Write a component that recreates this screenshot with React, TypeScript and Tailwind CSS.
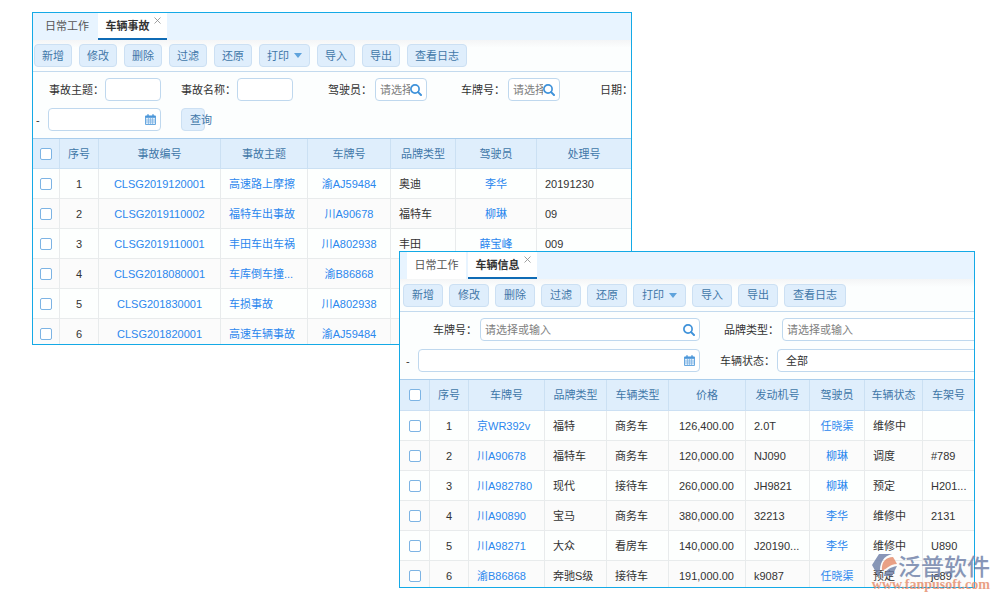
import type { ReactNode } from 'react';
import { clsx } from 'clsx';

interface Column {
  title: string;
  width?: string;
  align?: 'left' | 'center' | 'right';
  link?: boolean;
}

const ACCIDENT_COLUMNS: Column[] = [
  { title: '序号', width: 'w-[39px]', align: 'center' },
  { title: '事故编号', width: 'w-[122px]', align: 'center', link: true },
  { title: '事故主题', width: 'w-[87px]', link: true },
  { title: '车牌号', width: 'w-[83px]', align: 'center', link: true },
  { title: '品牌类型', width: 'w-[65px]' },
  { title: '驾驶员', width: 'w-[81px]', align: 'center', link: true },
  { title: '处理号' },
];

const ACCIDENTS = [
  ['1', 'CLSG2019120001', '高速路上摩擦', '渝AJ59484', '奥迪', '李华', '20191230'],
  ['2', 'CLSG2019110002', '福特车出事故', '川A90678', '福特车', '柳琳', '09'],
  ['3', 'CLSG2019110001', '丰田车出车祸', '川A802938', '丰田', '薛宝峰', '009'],
  ['4', 'CLSG2018080001', '车库倒车撞...', '渝B86868', '', '', ''],
  ['5', 'CLSG201830001', '车损事故', '川A802938', '', '', ''],
  ['6', 'CLSG201820001', '高速车辆事故', '渝AJ59484', '', '', ''],
];

const VEHICLE_COLUMNS: Column[] = [
  { title: '序号', width: 'w-[39px]', align: 'center' },
  { title: '车牌号', width: 'w-[76px]', link: true },
  { title: '品牌类型', width: 'w-[62px]' },
  { title: '车辆类型', width: 'w-[62px]' },
  { title: '价格', width: 'w-[77px]', align: 'right' },
  { title: '发动机号', width: 'w-16' },
  { title: '驾驶员', width: 'w-[55px]', align: 'center', link: true },
  { title: '车辆状态', width: 'w-[58px]' },
  { title: '车架号' },
];

const VEHICLES = [
  ['1', '京WR392v', '福特', '商务车', '126,400.00', '2.0T', '任晓渠', '维修中', ''],
  ['2', '川A90678', '福特车', '商务车', '120,000.00', 'NJ090', '柳琳', '调度', '#789'],
  ['3', '川A982780', '现代', '接待车', '260,000.00', 'JH9821', '柳琳', '预定', 'H201...'],
  ['4', '川A90890', '宝马', '商务车', '380,000.00', '32213', '李华', '维修中', '2131'],
  ['5', '川A98271', '大众', '看房车', '140,000.00', 'J20190...', '李华', '维修中', 'U890'],
  ['6', '渝B86868', '奔驰S级', '接待车', '191,000.00', 'k9087', '任晓渠', '预定', 'je89'],
];

const ACTIONS = ['新增', '修改', '删除', '过滤', '还原', '打印', '导入', '导出', '查看日志'];

const BOX = 'flex h-[23px] items-center rounded border border-[#bfd8ee] bg-white';

function SearchIcon() {
  return (
    <svg viewBox="0 0 12 12" className="size-3 shrink-0" fill="none" stroke="#3f92da">
      <circle cx="5" cy="5" r="4.1" strokeWidth="1.7" />
      <path d="M8.1 8.1 11 11" strokeWidth="2" strokeLinecap="round" />
    </svg>
  );
}

function CalendarIcon() {
  return (
    <svg viewBox="0 0 11 11" className="size-[11px] shrink-0">
      <path d="M.5 2h10v8.5H.5z" fill="#dcecfa" stroke="#69a8df" />
      <path d="M.5 1.8h10v2H.5z" fill="#4b96d9" />
      <path d="M3 .3v2M8 .3v2" stroke="#4b96d9" strokeWidth="1.4" />
      <path d="M3.5 4v6M5.5 4v6M7.5 4v6M1 6h9M1 8h9" stroke="#7db3e3" strokeWidth=".7" />
    </svg>
  );
}

function Tabs({ current, raised }: { current: string; raised?: boolean }) {
  return (
    <div className={clsx('flex h-[27px] bg-[#e8f4ff]', raised ? 'pl-[7px]' : 'pl-[3px]')}>
      <button
        className={clsx('pb-0.5 text-center text-[#555]', raised ? 'w-[59px] bg-white' : 'w-[62px]')}
      >
        日常工作
      </button>
      <div className={clsx('relative flex border-b-2 border-[#0f6bb5] bg-white', raised && 'ml-0.5')}>
        <button className="w-[69px] pr-2.5 text-center font-bold text-[#333]">{current}</button>
        <button aria-label="关闭" className="absolute top-1 right-1.5">
          <svg viewBox="0 0 7 7" className="size-[7px]" stroke="#888" strokeWidth=".8">
            <path d="M.5.5l6 6M6.5.5l-6 6" />
          </svg>
        </button>
      </div>
    </div>
  );
}

function Toolbar({ className, buttonClass }: { className: string; buttonClass: string }) {
  return (
    <div
      className={clsx(
        'flex items-center overflow-hidden border-b border-[#c3daee] bg-linear-to-b from-[#f4f5f6] to-[#fcfefe] to-25%',
        className,
      )}
    >
      {ACTIONS.map((action) => (
        <button
          key={action}
          className={clsx(
            'flex h-[23px] shrink-0 items-center gap-[5px] rounded border border-[#cce0f3] bg-[#dfeefc] text-[#3f77a8]',
            buttonClass,
          )}
        >
          {action}
          {action === '打印' && (
            <svg viewBox="0 0 8 5" className="h-[5px] w-2" fill="#5fa3dc">
              <path d="M0 0h8L4 5z" />
            </svg>
          )}
        </button>
      ))}
    </div>
  );
}

interface SearchFieldProps {
  id: string;
  label: string;
  labelWidth: string;
  boxWidth: string;
  icon?: boolean;
  placeholder?: string;
}

function SearchField({ id, label, labelWidth, boxWidth, icon, placeholder }: SearchFieldProps) {
  return (
    <div className="flex shrink-0 items-center">
      <label htmlFor={id} className={clsx('whitespace-nowrap', labelWidth)}>
        {label}
      </label>
      <div className={clsx(BOX, boxWidth, 'px-1')}>
        <input
          id={id}
          placeholder={placeholder}
          className="min-w-0 flex-1 outline-none placeholder:text-[#808080]"
        />
        {icon && <SearchIcon />}
      </div>
    </div>
  );
}

function DateBox({ id, label, width }: { id: string; label: string; width: string }) {
  return (
    <div className={clsx(BOX, width, 'shrink-0 px-1')}>
      <input id={id} aria-label={label} className="min-w-0 flex-1 outline-none" />
      <CalendarIcon />
    </div>
  );
}

function CheckBox({ label }: { label: string }) {
  return (
    <input
      type="checkbox"
      aria-label={label}
      className="mx-auto block size-3 appearance-none rounded-xs border border-[#7db4e4] bg-white"
    />
  );
}

interface DataTableProps {
  columns: Column[];
  rows: string[][];
  checkWidth: string;
  headHeight: string;
}

function DataTable({ columns, rows, checkWidth, headHeight }: DataTableProps) {
  return (
    <table className="w-full table-fixed border-separate border-spacing-0 border-t border-[#a9cdec]">
      <thead>
        <tr className={clsx('bg-[#dfeefc] text-[#3f77a8]', headHeight)}>
          <th className={clsx('border-r border-b border-[#cbe0f3]', checkWidth)}>
            <CheckBox label="全选" />
          </th>
          {columns.map((col) => (
            <th
              key={col.title}
              className={clsx(
                'border-r border-b border-[#cbe0f3] text-center font-normal whitespace-nowrap last:border-r-0',
                col.width,
              )}
            >
              {col.title}
            </th>
          ))}
        </tr>
      </thead>
      <tbody>
        {rows.map((row) => (
          <tr key={row[0]} className="h-[30px] bg-[#fdfffe] even:bg-[#fbfbfb]">
            <td className="border-r border-b border-[#e8ebec]">
              <CheckBox label={`选择第${row[0]}行`} />
            </td>
            {columns.map((col, i) => (
              <td
                key={col.title}
                className={clsx(
                  'border-r border-b border-[#e8ebec] whitespace-nowrap last:border-r-0',
                  col.align === 'center' && 'text-center',
                  col.align === 'right' && 'pr-[11px] text-right',
                  !col.align && 'pl-2',
                )}
              >
                {col.link && row[i] ? (
                  <a href="#" className="text-[#2b87ee]">
                    {row[i]}
                  </a>
                ) : (
                  row[i]
                )}
              </td>
            ))}
          </tr>
        ))}
      </tbody>
    </table>
  );
}

function Window({ className, children }: { className: string; children: ReactNode }) {
  return (
    <section className={clsx('absolute overflow-hidden border border-[#14a9e6] bg-[#fcfefe]', className)}>
      {children}
    </section>
  );
}

function AccidentWindow() {
  return (
    <Window className="top-3 right-[368px] left-8 max-h-[333px]">
      <Tabs current="车辆事故" />
      <Toolbar className="h-8 gap-[7px] pl-px" buttonClass="px-[7px]" />
      <form className="pt-1.5 pb-[7px]">
        <div className="flex pl-4">
          <SearchField id="topic" label="事故主题：" labelWidth="w-14" boxWidth="mr-5 w-14" />
          <SearchField id="name" label="事故名称：" labelWidth="w-14" boxWidth="mr-[35px] w-14" />
          <SearchField
            id="driver"
            label="驾驶员："
            labelWidth="w-[47px]"
            boxWidth="mr-[34px] w-[52px]"
            placeholder="请选择或输入"
            icon
          />
          <SearchField
            id="plate"
            label="车牌号："
            labelWidth="w-[47px]"
            boxWidth="mr-10 w-[52px]"
            placeholder="请选择或输入"
            icon
          />
          <label htmlFor="accident-date" className="flex shrink-0 items-center whitespace-nowrap">
            日期：
          </label>
        </div>
        <div className="mt-[7px] flex items-center pl-[3px]">
          <span className="w-3 shrink-0">-</span>
          <DateBox id="accident-date" label="结束日期" width="mr-5 w-[113px]" />
          <button
            type="button"
            className="h-[23px] w-6 rounded border border-[#cce0f3] bg-[#dfeefc] pl-2 whitespace-nowrap text-[#3f77a8]"
          >
            查询
          </button>
        </div>
      </form>
      <DataTable columns={ACCIDENT_COLUMNS} rows={ACCIDENTS} checkWidth="w-[27px]" headHeight="h-[30px]" />
    </Window>
  );
}

function VehicleWindow() {
  return (
    <Window className="top-[251px] right-[25px] left-[399px] max-h-[337px]">
      <Tabs current="车辆信息" raised />
      <Toolbar className="h-[33px] gap-1.5 pl-[3px]" buttonClass="px-2" />
      <form className="pt-1.5 pb-[7px]">
        <div className="flex pl-[33px]">
          <SearchField
            id="vehicle-plate"
            label="车牌号："
            labelWidth="w-[47px]"
            boxWidth="mr-6 w-[220px]"
            placeholder="请选择或输入"
            icon
          />
          <SearchField
            id="brand"
            label="品牌类型："
            labelWidth="w-[58px]"
            boxWidth="w-[220px]"
            placeholder="请选择或输入"
            icon
          />
        </div>
        <div className="mt-2 flex items-center pl-1.5">
          <span className="w-3 shrink-0">-</span>
          <DateBox id="vehicle-date" label="结束日期" width="mr-5 w-[282px]" />
          <label htmlFor="status" className="w-[57px] shrink-0 whitespace-nowrap">
            车辆状态：
          </label>
          <select id="status" className={clsx(BOX, 'w-[225px] shrink-0 px-1')}>
            <option>全部</option>
          </select>
        </div>
      </form>
      <DataTable columns={VEHICLE_COLUMNS} rows={VEHICLES} checkWidth="w-[30px]" headHeight="h-[31px]" />
    </Window>
  );
}

function Watermark() {
  return (
    <div className="absolute top-[549px] right-2.5 text-right opacity-80">
      <div className="flex items-center justify-end">
        <svg viewBox="0 0 26 24" className="h-6 w-[26px]">
          <path d="M7 1h13C12 3 7 9 8 22L6 23 0 12z" fill="#6b7da6" />
          <path d="M10 18C9 9 14 4 21 4q2 3 4 7c-7 0-9 4-15 7z" fill="#e58a68" />
          <path d="M12 22c2-5 6-8 13-9l-5 10h-8z" fill="#6b7da6" />
        </svg>
        <span className="font-['Noto_Sans_CJK_SC',sans-serif] text-[23px] leading-8 font-medium text-[#6b7da6]">
          泛普软件
        </span>
      </div>
      <div className="-mt-1 font-['Liberation_Serif',serif] text-sm leading-4 font-bold text-[#e58a68]">
        www.fanpusoft.com
      </div>
    </div>
  );
}

export default function App() {
  return (
    <main className="relative min-h-screen overflow-hidden bg-white font-['Liberation_Sans','Noto_Sans_CJK_SC',sans-serif] text-[11px] leading-4 text-[#333]">
      <AccidentWindow />
      <VehicleWindow />
      <Watermark />
    </main>
  );
}
